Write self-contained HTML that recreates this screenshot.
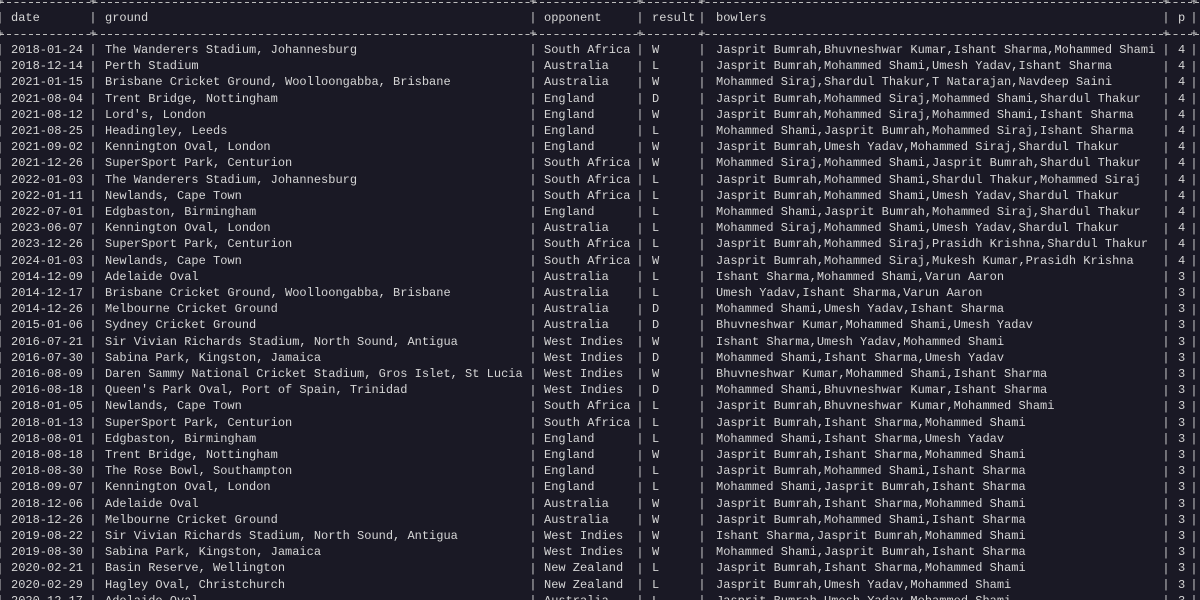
<!DOCTYPE html>
<html><head><meta charset="utf-8"><style>
html,body{margin:0;padding:0;width:1200px;height:600px;overflow:hidden}
body{background:#1a1925;color:#d6d6d6;font-family:"Liberation Mono","DejaVu Sans Mono",monospace;font-size:12px;position:relative}
.ln{position:absolute;left:0;width:1200px;height:1px;background:repeating-linear-gradient(90deg,#bdbdbd 0 4px,transparent 4px 7.2px)}
.pc{position:absolute;top:-6.2px;height:606px;overflow:hidden;line-height:16.2px;white-space:pre;color:#cfcfcf}
.r{position:absolute;left:0;width:1200px;height:16.2px;line-height:16.2px;white-space:pre}
.r span{position:absolute;top:0}
.r span:nth-child(1){left:11px}
.r span:nth-child(2){left:105px}
.r span:nth-child(3){left:544px}
.r span:nth-child(4){left:652px}
.r span:nth-child(5){left:716px}
.r span:nth-child(6){left:1178px}
</style></head><body>
<div class="ln" style="top:2px"></div>
<div class="ln" style="top:34px"></div>
<div class="pc" style="left:-3.6px">+
|
+
|
|
|
|
|
|
|
|
|
|
|
|
|
|
|
|
|
|
|
|
|
|
|
|
|
|
|
|
|
|
|
|
|
|
|</div>
<div class="pc" style="left:89.4px">+
|
+
|
|
|
|
|
|
|
|
|
|
|
|
|
|
|
|
|
|
|
|
|
|
|
|
|
|
|
|
|
|
|
|
|
|
|</div>
<div class="pc" style="left:529.4px">+
|
+
|
|
|
|
|
|
|
|
|
|
|
|
|
|
|
|
|
|
|
|
|
|
|
|
|
|
|
|
|
|
|
|
|
|
|</div>
<div class="pc" style="left:636.4px">+
|
+
|
|
|
|
|
|
|
|
|
|
|
|
|
|
|
|
|
|
|
|
|
|
|
|
|
|
|
|
|
|
|
|
|
|
|</div>
<div class="pc" style="left:698.4px">+
|
+
|
|
|
|
|
|
|
|
|
|
|
|
|
|
|
|
|
|
|
|
|
|
|
|
|
|
|
|
|
|
|
|
|
|
|</div>
<div class="pc" style="left:1162.4px">+
|
+
|
|
|
|
|
|
|
|
|
|
|
|
|
|
|
|
|
|
|
|
|
|
|
|
|
|
|
|
|
|
|
|
|
|
|</div>
<div class="pc" style="left:1190.4px">+
|
+
|
|
|
|
|
|
|
|
|
|
|
|
|
|
|
|
|
|
|
|
|
|
|
|
|
|
|
|
|
|
|
|
|
|
|</div>

<div class="r" style="top:10px"><span>date</span><span>ground</span><span>opponent</span><span>result</span><span>bowlers</span><span>p</span></div>

<div class="r" style="top:42px"><span>2018-01-24</span><span>The Wanderers Stadium, Johannesburg</span><span>South Africa</span><span>W</span><span>Jasprit Bumrah,Bhuvneshwar Kumar,Ishant Sharma,Mohammed Shami</span><span>4</span></div>
<div class="r" style="top:58.2px"><span>2018-12-14</span><span>Perth Stadium</span><span>Australia</span><span>L</span><span>Jasprit Bumrah,Mohammed Shami,Umesh Yadav,Ishant Sharma</span><span>4</span></div>
<div class="r" style="top:74.4px"><span>2021-01-15</span><span>Brisbane Cricket Ground, Woolloongabba, Brisbane</span><span>Australia</span><span>W</span><span>Mohammed Siraj,Shardul Thakur,T Natarajan,Navdeep Saini</span><span>4</span></div>
<div class="r" style="top:90.6px"><span>2021-08-04</span><span>Trent Bridge, Nottingham</span><span>England</span><span>D</span><span>Jasprit Bumrah,Mohammed Siraj,Mohammed Shami,Shardul Thakur</span><span>4</span></div>
<div class="r" style="top:106.8px"><span>2021-08-12</span><span>Lord's, London</span><span>England</span><span>W</span><span>Jasprit Bumrah,Mohammed Siraj,Mohammed Shami,Ishant Sharma</span><span>4</span></div>
<div class="r" style="top:123px"><span>2021-08-25</span><span>Headingley, Leeds</span><span>England</span><span>L</span><span>Mohammed Shami,Jasprit Bumrah,Mohammed Siraj,Ishant Sharma</span><span>4</span></div>
<div class="r" style="top:139.2px"><span>2021-09-02</span><span>Kennington Oval, London</span><span>England</span><span>W</span><span>Jasprit Bumrah,Umesh Yadav,Mohammed Siraj,Shardul Thakur</span><span>4</span></div>
<div class="r" style="top:155.4px"><span>2021-12-26</span><span>SuperSport Park, Centurion</span><span>South Africa</span><span>W</span><span>Mohammed Siraj,Mohammed Shami,Jasprit Bumrah,Shardul Thakur</span><span>4</span></div>
<div class="r" style="top:171.6px"><span>2022-01-03</span><span>The Wanderers Stadium, Johannesburg</span><span>South Africa</span><span>L</span><span>Jasprit Bumrah,Mohammed Shami,Shardul Thakur,Mohammed Siraj</span><span>4</span></div>
<div class="r" style="top:187.8px"><span>2022-01-11</span><span>Newlands, Cape Town</span><span>South Africa</span><span>L</span><span>Jasprit Bumrah,Mohammed Shami,Umesh Yadav,Shardul Thakur</span><span>4</span></div>
<div class="r" style="top:204px"><span>2022-07-01</span><span>Edgbaston, Birmingham</span><span>England</span><span>L</span><span>Mohammed Shami,Jasprit Bumrah,Mohammed Siraj,Shardul Thakur</span><span>4</span></div>
<div class="r" style="top:220.2px"><span>2023-06-07</span><span>Kennington Oval, London</span><span>Australia</span><span>L</span><span>Mohammed Siraj,Mohammed Shami,Umesh Yadav,Shardul Thakur</span><span>4</span></div>
<div class="r" style="top:236.4px"><span>2023-12-26</span><span>SuperSport Park, Centurion</span><span>South Africa</span><span>L</span><span>Jasprit Bumrah,Mohammed Siraj,Prasidh Krishna,Shardul Thakur</span><span>4</span></div>
<div class="r" style="top:252.6px"><span>2024-01-03</span><span>Newlands, Cape Town</span><span>South Africa</span><span>W</span><span>Jasprit Bumrah,Mohammed Siraj,Mukesh Kumar,Prasidh Krishna</span><span>4</span></div>
<div class="r" style="top:268.8px"><span>2014-12-09</span><span>Adelaide Oval</span><span>Australia</span><span>L</span><span>Ishant Sharma,Mohammed Shami,Varun Aaron</span><span>3</span></div>
<div class="r" style="top:285px"><span>2014-12-17</span><span>Brisbane Cricket Ground, Woolloongabba, Brisbane</span><span>Australia</span><span>L</span><span>Umesh Yadav,Ishant Sharma,Varun Aaron</span><span>3</span></div>
<div class="r" style="top:301.2px"><span>2014-12-26</span><span>Melbourne Cricket Ground</span><span>Australia</span><span>D</span><span>Mohammed Shami,Umesh Yadav,Ishant Sharma</span><span>3</span></div>
<div class="r" style="top:317.4px"><span>2015-01-06</span><span>Sydney Cricket Ground</span><span>Australia</span><span>D</span><span>Bhuvneshwar Kumar,Mohammed Shami,Umesh Yadav</span><span>3</span></div>
<div class="r" style="top:333.6px"><span>2016-07-21</span><span>Sir Vivian Richards Stadium, North Sound, Antigua</span><span>West Indies</span><span>W</span><span>Ishant Sharma,Umesh Yadav,Mohammed Shami</span><span>3</span></div>
<div class="r" style="top:349.8px"><span>2016-07-30</span><span>Sabina Park, Kingston, Jamaica</span><span>West Indies</span><span>D</span><span>Mohammed Shami,Ishant Sharma,Umesh Yadav</span><span>3</span></div>
<div class="r" style="top:366px"><span>2016-08-09</span><span>Daren Sammy National Cricket Stadium, Gros Islet, St Lucia</span><span>West Indies</span><span>W</span><span>Bhuvneshwar Kumar,Mohammed Shami,Ishant Sharma</span><span>3</span></div>
<div class="r" style="top:382.2px"><span>2016-08-18</span><span>Queen's Park Oval, Port of Spain, Trinidad</span><span>West Indies</span><span>D</span><span>Mohammed Shami,Bhuvneshwar Kumar,Ishant Sharma</span><span>3</span></div>
<div class="r" style="top:398.4px"><span>2018-01-05</span><span>Newlands, Cape Town</span><span>South Africa</span><span>L</span><span>Jasprit Bumrah,Bhuvneshwar Kumar,Mohammed Shami</span><span>3</span></div>
<div class="r" style="top:414.6px"><span>2018-01-13</span><span>SuperSport Park, Centurion</span><span>South Africa</span><span>L</span><span>Jasprit Bumrah,Ishant Sharma,Mohammed Shami</span><span>3</span></div>
<div class="r" style="top:430.8px"><span>2018-08-01</span><span>Edgbaston, Birmingham</span><span>England</span><span>L</span><span>Mohammed Shami,Ishant Sharma,Umesh Yadav</span><span>3</span></div>
<div class="r" style="top:447px"><span>2018-08-18</span><span>Trent Bridge, Nottingham</span><span>England</span><span>W</span><span>Jasprit Bumrah,Ishant Sharma,Mohammed Shami</span><span>3</span></div>
<div class="r" style="top:463.2px"><span>2018-08-30</span><span>The Rose Bowl, Southampton</span><span>England</span><span>L</span><span>Jasprit Bumrah,Mohammed Shami,Ishant Sharma</span><span>3</span></div>
<div class="r" style="top:479.4px"><span>2018-09-07</span><span>Kennington Oval, London</span><span>England</span><span>L</span><span>Mohammed Shami,Jasprit Bumrah,Ishant Sharma</span><span>3</span></div>
<div class="r" style="top:495.6px"><span>2018-12-06</span><span>Adelaide Oval</span><span>Australia</span><span>W</span><span>Jasprit Bumrah,Ishant Sharma,Mohammed Shami</span><span>3</span></div>
<div class="r" style="top:511.8px"><span>2018-12-26</span><span>Melbourne Cricket Ground</span><span>Australia</span><span>W</span><span>Jasprit Bumrah,Mohammed Shami,Ishant Sharma</span><span>3</span></div>
<div class="r" style="top:528px"><span>2019-08-22</span><span>Sir Vivian Richards Stadium, North Sound, Antigua</span><span>West Indies</span><span>W</span><span>Ishant Sharma,Jasprit Bumrah,Mohammed Shami</span><span>3</span></div>
<div class="r" style="top:544.2px"><span>2019-08-30</span><span>Sabina Park, Kingston, Jamaica</span><span>West Indies</span><span>W</span><span>Mohammed Shami,Jasprit Bumrah,Ishant Sharma</span><span>3</span></div>
<div class="r" style="top:560.4px"><span>2020-02-21</span><span>Basin Reserve, Wellington</span><span>New Zealand</span><span>L</span><span>Jasprit Bumrah,Ishant Sharma,Mohammed Shami</span><span>3</span></div>
<div class="r" style="top:576.6px"><span>2020-02-29</span><span>Hagley Oval, Christchurch</span><span>New Zealand</span><span>L</span><span>Jasprit Bumrah,Umesh Yadav,Mohammed Shami</span><span>3</span></div>
<div class="r" style="top:592.8px;height:7.2px;overflow:hidden"><span>2020-12-17</span><span>Adelaide Oval</span><span>Australia</span><span>L</span><span>Jasprit Bumrah,Umesh Yadav,Mohammed Shami</span><span>3</span></div>
</body></html>
